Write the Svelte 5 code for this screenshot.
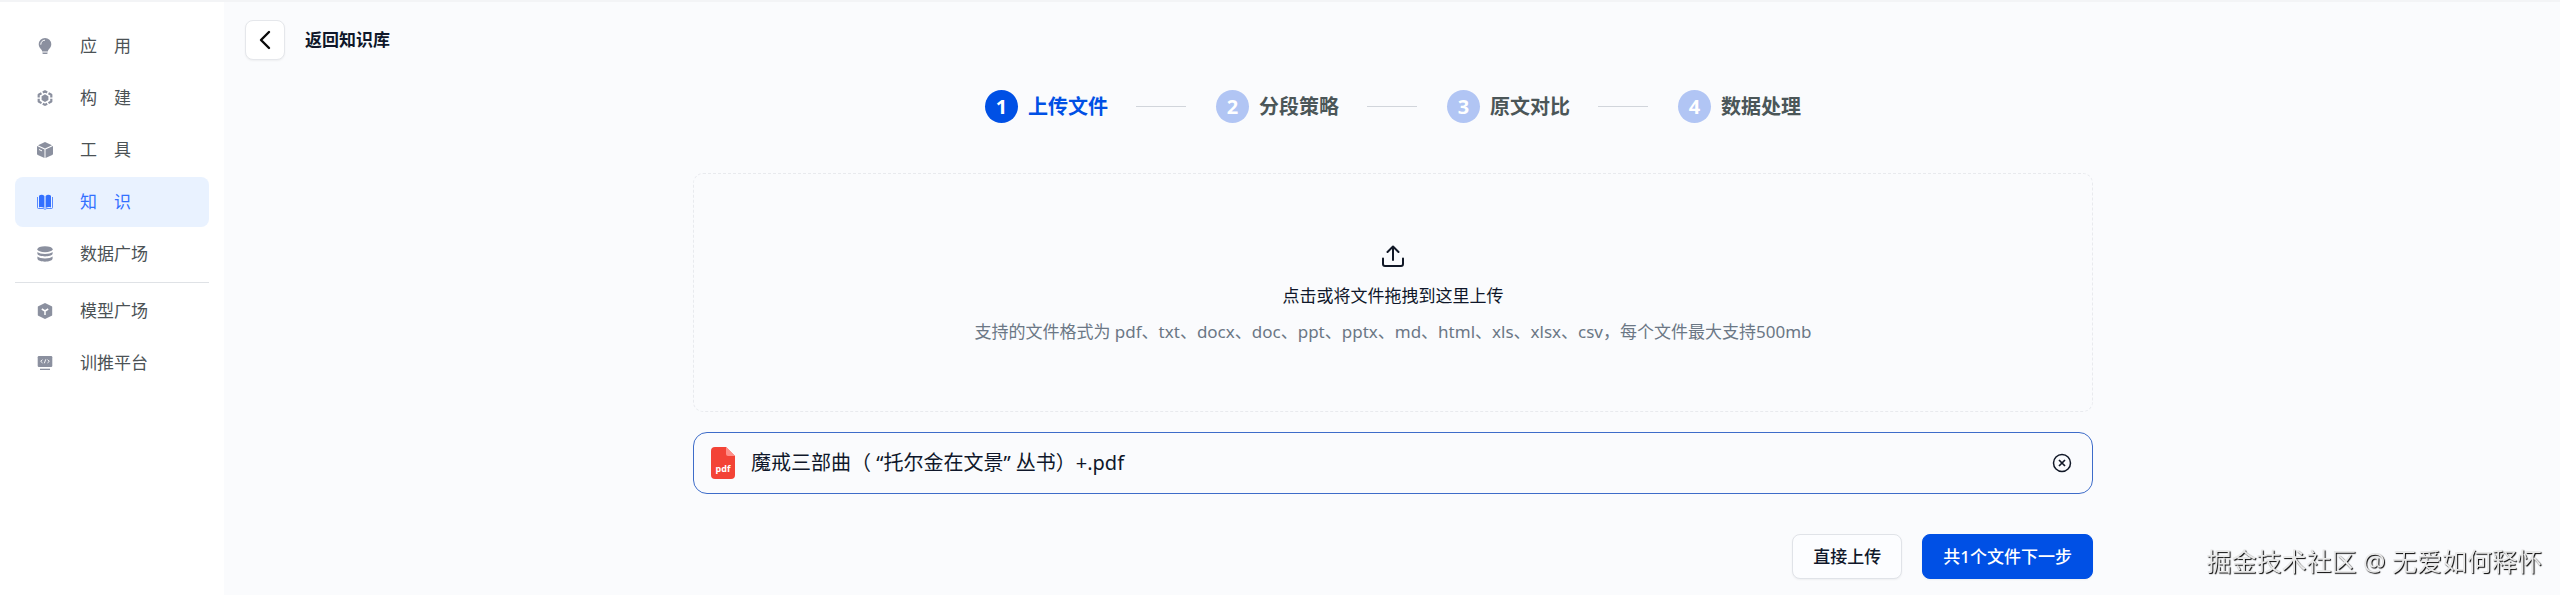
<script lang="ts">
  const spaced = (a: string, b: string) => `${a}\u3000${b}`

  const mainNav = [
    { icon: 'bulb', label: spaced('应', '用') },
    { icon: 'hex', label: spaced('构', '建') },
    { icon: 'box', label: spaced('工', '具') },
    { icon: 'book', label: spaced('知', '识') },
    { icon: 'data', label: '数据广场' },
  ]
  const extraNav = [
    { icon: 'model', label: '模型广场' },
    { icon: 'train', label: '训推平台' },
  ]
  const steps = ['上传文件', '分段策略', '原文对比', '数据处理']
  const formats = ['pdf', 'txt', 'docx', 'doc', 'ppt', 'pptx', 'md', 'html', 'xls', 'xlsx', 'csv']

  let active = $state('book')
  let current = $state(0)
  let files = $state(['魔戒三部曲（ “托尔金在文景” 丛书）+.pdf'])

  function addFiles(e: Event) {
    const input = e.target as HTMLInputElement
    files = [...files, ...Array.from(input.files ?? []).map((f) => f.name)]
  }
</script>

{#snippet navIcon(name: string)}
  <svg class="navIcon" viewBox="0 0 16 16" fill="currentColor" aria-hidden="true">
    {#if name === 'bulb'}
      <path d="M8 0a6.3 6.3 0 0 0-6.3 6.3c0 2.6 1.6 4.3 3 5.600l.5 1.600h5.600l.5-1.600c1.400-1.300 3-3 3-5.600A6.300 6.300 0 0 0 8 0z" />
      <path d="M5.400 14.400h5.200v.6a1 1 0 0 1-1 1H6.400a1 1 0 0 1-1-1z" />
      <path d="M3.800 6.300A4.200 4.200 0 0 1 7.600 2.200" fill="none" stroke="#fff" stroke-linecap="round" />
    {:else if name === 'hex'}
      <path d="M8 4.300l3.400 1.900v3.800L8 11.900l-3.400-1.900V6.200z" />
      <path
        d="M5.800 2.500L8 1.300l2.200 1.200M11.500 3.200l2.800 1.600v2.700M14.300 8.800v2.700l-2.800 1.600M10.200 13.700L8 14.900l-2.200-1.200M4.500 13.100l-2.800-1.600V8.800M1.700 7.500V4.800l2.800-1.600"
        fill="none"
        stroke="currentColor"
        stroke-width="2.200"
        stroke-linejoin="round"
      />
    {:else if name === 'box'}
      <path d="M8 0l7 3.200-7 3.300-7-3.300z" />
      <path d="M0 4.100l7.500 3.400V16L.8 13a1.300 1.300 0 0 1-.8-1.200zM16 4.100L8.500 7.500V16l6.700-3a1.300 1.300 0 0 0 .8-1.200z" />
      <path d="M2 7.500l3 1.400" stroke="#fff" />
    {:else if name === 'book'}
      <path d="M2 1.800C3.500.4 6 .4 7.400 2v12c-1.700-1-3.600-1.100-5.400-.6zM14 1.800C12.500.4 10 .4 8.600 2v12c1.700-1 3.600-1.100 5.400-.6z" />
      <path d="M.5 3v10.500a1 1 0 0 0 1 1h4.700l1.800.8 1.800-.8h4.700a1 1 0 0 0 1-1V3" fill="none" stroke="currentColor" stroke-width=".8" />
    {:else if name === 'data'}
      <ellipse cx="8" cy="3.200" rx="7.600" ry="3" />
      <path d="M.4 6c2.500 2.600 12.700 2.600 15.200 0v1.700c-.6 3.600-14.600 3.600-15.200 0zM.4 10.600c2.500 2.600 12.700 2.600 15.200 0v2c-.6 4.200-14.600 4.200-15.200 0z" />
    {:else if name === 'model'}
      <path d="M8 0l6.700 3.200a1 1 0 0 1 .5.900v7.800a1 1 0 0 1-.5.900L8 16l-6.700-3.200a1 1 0 0 1-.5-.9V4.100a1 1 0 0 1 .5-.9z" />
      <path d="M4.800 6L8 8l3.200-2M8 8v4" fill="none" stroke="#fff" stroke-width="1.500" />
    {:else}
      <rect x=".7" y="1" width="14.600" height="11" rx="1.200" />
      <path d="M3 13.700h10V15H3z" />
      <path
        d="M5.500 4.700L3.700 6.300l1.800 1.600M10.500 4.700l1.800 1.600-1.800 1.600M8.800 4.300l-1.500 4"
        fill="none"
        stroke="#fff"
        stroke-width=".9"
      />
    {/if}
  </svg>
{/snippet}

{#snippet navItem(item: { icon: string; label: string })}
  <a
    href="#{item.icon}"
    class="navItem"
    class:active={active === item.icon}
    onclick={() => (active = item.icon)}
  >
    {@render navIcon(item.icon)}
    {item.label}
  </a>
{/snippet}

<div class="page">
  <nav class="sidebar">
    {#each mainNav as item}
      {@render navItem(item)}
    {/each}
    <hr />
    {#each extraNav as item}
      {@render navItem(item)}
    {/each}
  </nav>

  <main>
    <header>
      <button class="back" aria-labelledby="title">
        <svg viewBox="0 0 20 20" fill="none" stroke="#090909" stroke-width="2.400" aria-hidden="true">
          <path d="M14 2L6 10l8 8" stroke-linecap="round" stroke-linejoin="round" />
        </svg>
      </button>
      <h1 id="title">返回知识库</h1>
    </header>

    <ol class="steps">
      {#each steps as step, i}
        <li class:current={i === current}>
          <span class="number">{i + 1}</span>
          <span>{step}</span>
        </li>
      {/each}
    </ol>

    <div class="content">
      <label class="dropzone">
        <input type="file" multiple onchange={addFiles} />
        <svg viewBox="0 0 24 24" fill="none" stroke="#111827" stroke-width="2" aria-hidden="true">
          <path
            d="M12 16V2.500M6.500 8L12 2.500 17.500 8M2 14.500V20a2 2 0 0 0 2 2h16a2 2 0 0 0 2-2v-5.500"
            stroke-linecap="round"
            stroke-linejoin="round"
          />
        </svg>
        <span class="prompt">点击或将文件拖拽到这里上传</span>
        <span class="hint">支持的文件格式为 {formats.join('、')}，每个文件最大支持500mb</span>
      </label>

      {#each files as file, i}
        <div class="file">
          <svg class="fileIcon" viewBox="0 0 24 32" aria-hidden="true">
            <path d="M4 0h11l9 9v19a4 4 0 0 1-4 4H4a4 4 0 0 1-4-4V4a4 4 0 0 1 4-4z" fill="#f34336" />
            <path d="M15 0l9 9h-7a2 2 0 0 1-2-2z" fill="#ff8f88" />
            <text x="12" y="25" text-anchor="middle">pdf</text>
          </svg>
          <span class="fileName">{file}</span>
          <button class="remove" aria-label="remove" onclick={() => files.splice(i, 1)}>
            <svg viewBox="0 0 20 20" fill="none" stroke="#111827" aria-hidden="true">
              <circle cx="10" cy="10" r="8.500" stroke-width="1.500" />
              <path d="M7 7l6 6M13 7l-6 6" stroke-width="1.700" />
            </svg>
          </button>
        </div>
      {/each}

      <div class="actions">
        <button>直接上传</button>
        <button class="primary" onclick={() => (current = Math.min(current + 1, 3))}>
          共{files.length}个文件下一步
        </button>
      </div>
    </div>
  </main>

  <p class="watermark">掘金技术社区 @ 无爱如何释怀</p>
</div>

<style>
  :global(body) {
    background: #fafbfd;
  }

  .page {
    display: flex;
    min-height: 100vh;
    box-sizing: border-box;
    border-top: 2px solid #f3f4f6;
    font-family: 'Noto Sans', 'Noto Sans CJK SC', sans-serif;
    font-size: 17px;
    line-height: 24px;
    color: #0f172a;
  }

  button {
    font: inherit;
    color: inherit;
    cursor: pointer;
  }

  .sidebar {
    flex: 0 0 224px;
    box-sizing: border-box;
    display: flex;
    flex-direction: column;
    gap: 2px;
    padding: 19px 15px;
    background: #fff;
  }

  .navItem {
    display: flex;
    align-items: center;
    gap: 27px;
    height: 50px;
    padding-left: 22px;
    border-radius: 8px;
    color: #4b5255;
    text-decoration: none;
  }

  .navIcon {
    width: 16px;
    height: 16px;
    color: #8b909f;
  }

  .navItem.active {
    background: #e9f2ff;
    color: #3370ff;
  }

  .navItem.active .navIcon {
    color: #3370ff;
  }

  hr {
    width: 100%;
    margin: 1px 0;
    border: 0;
    border-top: 1px solid #dfe2e6;
  }

  main {
    flex: 1;
    padding: 18px 19px 14px 21px;
  }

  header {
    display: flex;
    align-items: center;
    gap: 20px;
  }

  .back {
    display: flex;
    align-items: center;
    justify-content: center;
    width: 40px;
    height: 40px;
    padding: 0;
    border: 1px solid #e5e7eb;
    border-radius: 8px;
    background: #fff;
    box-shadow: 0 1px 2px #0000000d;
  }

  .back svg {
    width: 20px;
    height: 20px;
  }

  h1 {
    margin: 0;
    font-size: 17px;
    font-weight: 700;
  }

  .steps {
    display: flex;
    justify-content: center;
    margin: 30px 0 50px;
    padding: 0;
    list-style: none;
    font-size: 20px;
    font-weight: 700;
    color: #4b5658;
  }

  .steps li {
    display: flex;
    align-items: center;
    gap: 10px;
  }

  .steps li + li::before {
    content: '';
    width: 50px;
    height: 1px;
    margin: 0 20px 0 28px;
    background: #d1d5db;
  }

  .steps .current {
    color: #0050e5;
  }

  .number {
    display: flex;
    align-items: center;
    justify-content: center;
    width: 33px;
    height: 33px;
    border-radius: 50%;
    background: #b1c5f4;
    color: #fff;
  }

  .current .number {
    background: #0050e5;
  }

  .content {
    max-width: 1400px;
    margin: 0 auto;
  }

  .dropzone {
    display: flex;
    flex-direction: column;
    align-items: center;
    box-sizing: border-box;
    min-height: 239px;
    padding-top: 70px;
    border: 1px dashed #e8eaee;
    border-radius: 10px;
    cursor: pointer;
  }

  .dropzone input {
    position: absolute;
    opacity: 0;
    width: 1px;
    height: 1px;
  }

  .dropzone svg {
    width: 24px;
    height: 24px;
  }

  .prompt {
    margin: 16px 0 12px;
  }

  .hint {
    color: #6b7785;
  }

  .file {
    display: flex;
    align-items: center;
    box-sizing: border-box;
    min-height: 62px;
    margin-top: 20px;
    padding: 0 20px 0 17px;
    border: 1px solid #3d6cc9;
    border-radius: 14px;
    font-size: 20px;
  }

  .fileIcon {
    width: 24px;
    height: 32px;
  }

  .fileIcon text {
    fill: #fff;
    font-size: 9px;
    font-weight: 700;
  }

  .fileName {
    flex: 1;
    margin-left: 16px;
  }

  .remove {
    display: flex;
    padding: 0;
    border: 0;
    background: none;
  }

  .remove svg {
    width: 20px;
    height: 20px;
  }

  .actions {
    display: flex;
    justify-content: flex-end;
    gap: 20px;
    margin-top: 40px;
  }

  .actions button {
    height: 45px;
    padding: 0 20px;
    border: 1px solid #e0e3e8;
    border-radius: 8px;
    background: #fcfdff;
    font-weight: 500;
    box-shadow: 0 1px 2px #0000000d;
  }

  .actions .primary {
    border-color: #0050e5;
    background: #0050e5;
    color: #fff;
  }

  .watermark {
    position: fixed;
    right: 18px;
    bottom: 16px;
    margin: 0;
    font-size: 25px;
    line-height: 36px;
    color: #e8e8e8;
    text-shadow: 1px 1px 1px #000;
  }
</style>
